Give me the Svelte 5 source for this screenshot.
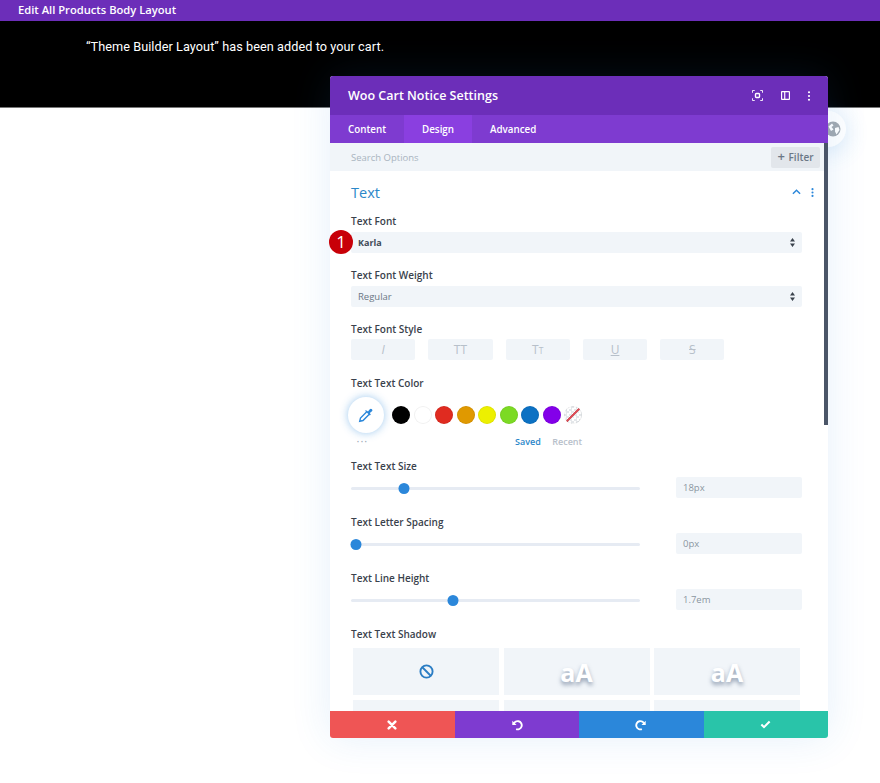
<script>
  const tabs = [
    { name: 'Content', active: false },
    { name: 'Design', active: true },
    { name: 'Advanced', active: false }
  ];
  const swatches = ['#000000', '#ffffff', '#e02b20', '#e09900', '#edf000', '#7cda24', '#0c71c3', '#8300e9'];
  const sliders = [
    { label: 'Text Text Size', value: '18px', pct: 18.3 },
    { label: 'Text Letter Spacing', value: '0px', pct: 1.7 },
    { label: 'Text Line Height', value: '1.7em', pct: 35.3 }
  ];
</script>

<div class="page">
  <div class="topbar">Edit All Products Body Layout</div>
  <div class="notice"><p>“Theme Builder Layout” has been added to your cart.</p></div>

  <div class="closer">
    <svg viewBox="0 0 16 16" width="16" height="16">
      <circle cx="8" cy="8" r="7.5" fill="#a3a9b0" />
      <path d="M3.5 5.5 7 2.5l1.5 2-2 1.5 2 2.5L6 10ZM10 7l3.5-1 1 3-3 4.500-1.500-3Z" fill="#fff" />
    </svg>
  </div>

  <section class="modal">
    <header class="head">
      <h1>Woo Cart Notice Settings</h1>
      <div class="head-icons">
        <svg viewBox="0 0 12 12" width="11" height="11" fill="none" stroke="#fff" stroke-width="1">
          <path d="M.5 3V.5H3M9 .5h2.500V3M11.500 9v2.500H9M3 11.500H.5V9" />
          <rect x="3.800" y="3.800" width="4.400" height="4.400" rx="1" stroke-width="1.500" />
        </svg>
        <svg viewBox="0 0 10 10" width="9" height="9">
          <path fill="#fff" fill-rule="evenodd" d="M1 0h8a1 1 0 0 1 1 1v8a1 1 0 0 1-1 1H1a1 1 0 0 1-1-1V1a1 1 0 0 1 1-1Zm.3 1.300v7.400h2.200V1.300Zm3.500 0v7.400h3.900V1.300Z" />
        </svg>
        <svg class="head-dots" viewBox="0 0 4 12" width="4" height="10" fill="#fff">
          <circle cx="2" cy="1.500" r="1.300" /><circle cx="2" cy="6" r="1.300" /><circle cx="2" cy="10.500" r="1.300" />
        </svg>
      </div>
    </header>

    <nav class="tabs">
      {#each tabs as t}
        <div class="tab" class:active={t.active}>{t.name}</div>
      {/each}
    </nav>

    <div class="search">
      <span>Search Options</span>
      <button class="filter"><b>+</b> Filter</button>
    </div>

    <div class="scrollbar"></div>

    <div class="body">
      <div class="section-head">
        <h2>Text</h2>
        <div class="section-icons">
          <svg viewBox="0 0 10 6" width="9" height="6" fill="none" stroke="#2b87da" stroke-width="1.600"><path d="M1 5l4-4 4 4" /></svg>
          <svg viewBox="0 0 4 12" width="3" height="9" fill="#2b87da"><circle cx="2" cy="1.500" r="1.400" /><circle cx="2" cy="6" r="1.400" /><circle cx="2" cy="10.500" r="1.400" /></svg>
        </div>
      </div>

      <div class="field">
        <div class="label">Text Font</div>
        <div class="select strong">Karla
          <svg class="arrows" viewBox="0 0 5 9" width="5" height="9" fill="#3a424c"><path d="M2.500 0 5 3.600H0ZM2.500 9 0 5.400h5Z" /></svg>
        </div>
      </div>
      <div class="field">
        <div class="label">Text Font Weight</div>
        <div class="select">Regular
          <svg class="arrows" viewBox="0 0 5 9" width="5" height="9" fill="#3a424c"><path d="M2.500 0 5 3.600H0ZM2.500 9 0 5.400h5Z" /></svg>
        </div>
      </div>
      <div class="field style-field">
        <div class="label">Text Font Style</div>
        <div class="styles">
          <div class="sbtn"><i>I</i></div>
          <div class="sbtn">TT</div>
          <div class="sbtn">T<small>T</small></div>
          <div class="sbtn"><u>U</u></div>
          <div class="sbtn"><s>S</s></div>
        </div>
      </div>

      <div class="field color-field">
        <div class="label">Text Text Color</div>
        <div class="colors">
          <div class="picker">
            <svg viewBox="0 0 16 16" width="16" height="16" fill="none" stroke="#2b87da" stroke-width="1.400">
              <path d="M9 4.500 2.500 11l-.8 3.300L5 13.500 11.500 7" />
              <path fill="#2b87da" stroke="none" d="M8.500 3.500l1.500 1 1.800-2.300a1.500 1.500 0 0 1 2.200 2.100L11.800 6l1 1.500-1 1-5-5Z" />
            </svg>
          </div>
          <div class="swatches">
            {#each swatches as c}
              <span class="swatch" style="background:{c}"></span>
            {/each}
            <span class="swatch none"></span>
          </div>
        </div>
        <div class="color-foot">
          <span class="dots">•••</span>
          <span class="saved">Saved</span>
          <span class="recent">Recent</span>
        </div>
      </div>

      {#each sliders as s}
        <div class="field slider-field">
          <div class="label">{s.label}</div>
          <div class="slider-row">
            <div class="track"><span class="thumb" style="left:{s.pct}%"></span></div>
            <div class="value">{s.value}</div>
          </div>
        </div>
      {/each}

      <div class="field">
        <div class="label">Text Text Shadow</div>
        <div class="shadows">
          <div class="shadow">
            <svg viewBox="0 0 16 16" width="15" height="15" fill="none" stroke="#2b7dc4" stroke-width="2"><circle cx="8" cy="8" r="6.500" /><path d="M3.500 3.500l9 9" /></svg>
          </div>
          <div class="shadow aa">aA</div>
          <div class="shadow aa">aA</div>
          <div class="shadow"></div>
          <div class="shadow"></div>
          <div class="shadow"></div>
        </div>
      </div>
    </div>

    <footer class="foot">
      <div class="act red">
        <svg viewBox="0 0 12 12" width="10" height="10" stroke="#fff" stroke-width="3" stroke-linecap="round"><path d="M2 2l8 8M10 2l-8 8" /></svg>
      </div>
      <div class="act purple">
        <svg viewBox="0 0 14 14" width="12" height="12" fill="none" stroke="#fff" stroke-width="2.200"><path d="M3 6.500A4.800 4.800 0 1 1 6 11.800" /><path d="M1.500 2v5h5" fill="#fff" stroke="none" /></svg>
      </div>
      <div class="act blue">
        <svg viewBox="0 0 14 14" width="12" height="12" fill="none" stroke="#fff" stroke-width="2.200"><path d="M11 6.500A4.800 4.800 0 1 0 8 11.800" /><path d="M12.500 2v5h-5" fill="#fff" stroke="none" /></svg>
      </div>
      <div class="act green">
        <svg viewBox="0 0 14 12" width="11" height="9" fill="none" stroke="#fff" stroke-width="2.800"><path d="M1.500 6l3.500 3.500L12.500 2" /></svg>
      </div>
    </footer>
  </section>

  <div class="badge">1</div>
</div>

<style>
  :global(body) { margin: 0; background: #fff; }
  .page {
    position: relative;
    height: 783px;
    overflow: hidden;
    font-family: "Open Sans", "Liberation Sans", sans-serif;
    color: #32373c;
  }
  .topbar {
    height: 21px;
    line-height: 20px;
    padding-left: 18px;
    background: #6c2eb9;
    color: #fff;
    font-size: 11.200px;
    font-weight: 600;
  }
  .notice {
    height: 87px;
    background: #000;
    border-bottom: 1px solid #777;
    box-sizing: border-box;
  }
  .notice p {
    margin: 0;
    padding: 17px 0 0 86px;
    font-family: "Roboto", sans-serif;
    font-size: 12.700px;
    line-height: 18px;
    font-weight: 400;
    letter-spacing: .06px;
    color: #fff;
  }
  .closer {
    position: absolute;
    left: 810px;
    top: 111px;
    width: 36px;
    height: 36px;
    border-radius: 50%;
    background: #fff;
    box-shadow: 0 4px 24px rgba(43, 135, 218, .2);
    display: flex;
    align-items: center;
    justify-content: flex-end;
    padding-right: 5px;
    box-sizing: border-box;
  }
  .modal {
    position: absolute;
    left: 330px;
    top: 76px;
    width: 498px;
    height: 662px;
    background: #fff;
    display: flex;
    flex-direction: column;
    border-radius: 3px;
    box-shadow: 0 0 40px rgba(43, 135, 218, .12);
  }
  .head {
    flex: none;
    height: 39px;
    background: #6c2eb9;
    display: flex;
    align-items: center;
    justify-content: space-between;
    padding: 0 17px 0 18px;
    border-radius: 3px 3px 0 0;
  }
  h1 {
    margin: 0;
    font-size: 12.500px;
    font-weight: 600;
    color: #fff;
  }
  .head-icons { display: flex; align-items: center; gap: 18px; }
  .head-dots { margin-left: -1px; }
  .tabs {
    flex: none;
    height: 28px;
    background: #7e3bd0;
    display: flex;
  }
  .tab {
    padding: 0 18px;
    line-height: 29px;
    color: #fff;
    font-size: 9.800px;
    font-weight: 600;
  }
  .tab.active { background: #8a3fe0; }
  .search {
    flex: none;
    height: 28px;
    background: #f1f5f9;
    display: flex;
    align-items: center;
    justify-content: space-between;
    padding: 0 8px 0 21px;
    font-size: 9.500px;
    font-weight: 500;
    color: #a9b4c0;
  }
  .filter {
    width: 49px;
    height: 21px;
    padding: 0;
    border: 0;
    border-radius: 2px;
    background: #e2e6eb;
    color: #6b7785;
    font: 600 10px "Open Sans", sans-serif;
  }
  .filter b { font-size: 13px; font-weight: 600; line-height: 10px; margin-right: 1px; }
  .scrollbar {
    position: absolute;
    right: 0;
    top: 67px;
    width: 4.500px;
    height: 282px;
    background: #4a5568;
  }
  .body {
    flex: 1;
    min-height: 0;
    overflow: hidden;
    padding: 0 26px 0 21px;
  }
  .section-head {
    display: flex;
    align-items: center;
    justify-content: space-between;
    height: 42px;
  }
  h2 {
    margin: 0;
    font-size: 14.500px;
    font-weight: 400;
    color: #2b87c9;
  }
  .section-icons { display: flex; align-items: center; gap: 10px; margin-right: -12px; }
  .field { margin-bottom: 14px; }
  .label {
    height: 16px;
    line-height: 16px;
    font-size: 10px;
    font-weight: 600;
    color: #3a424c;
  }
  .select {
    position: relative;
    height: 21px;
    margin-top: 3px;
    padding-left: 7px;
    line-height: 21px;
    background: #f1f5f9;
    border-radius: 2px;
    font-size: 9.500px;
    color: #6b7785;
  }
  .select.strong { color: #3f4a57; font-weight: 700; font-size: 9px; }
  .arrows { position: absolute; right: 7px; top: 6px; }
  .style-field { margin-bottom: 14.500px; }
  .styles { display: flex; gap: 13px; margin-top: 2px; }
  .sbtn {
    width: 64.300px;
    height: 21px;
    background: #f1f5f9;
    border-radius: 2px;
    text-align: center;
    line-height: 21px;
    font-size: 12px;
    color: #b7c0ca;
  }
  .sbtn small { font-size: 8.500px; }
  .colors { display: flex; align-items: center; margin-top: 6px; }
  .picker {
    width: 36px;
    height: 36px;
    margin-left: -3px;
    border-radius: 50%;
    background: #fff;
    box-shadow: 0 0 8px rgba(43, 135, 218, .45);
    display: flex;
    align-items: center;
    justify-content: center;
  }
  .swatches { display: flex; gap: 3.500px; margin-left: 8px; }
  .swatch {
    width: 18px;
    height: 18px;
    border-radius: 50%;
    box-shadow: inset 0 0 0 1px rgba(0, 0, 0, .06);
  }
  .swatch.none {
    background:
      linear-gradient(135deg, transparent 46%, #d9505a 46%, #d9505a 54%, transparent 54%),
      repeating-conic-gradient(#e4e7ea 0 25%, #fff 0 50%) 0 0 / 5px 5px;
  }
  .color-foot {
    display: flex;
    align-items: center;
    height: 14px;
    margin-top: 2px;
    font-size: 9px;
    font-weight: 600;
  }
  .dots { width: 28px; padding-left: 6px; font-size: 5px; letter-spacing: 2px; color: #9aa5b1; }
  .saved { margin-left: 130px; color: #2b87c9; }
  .recent { margin-left: 11.500px; color: #b7c0ca; }
  .color-field { margin-bottom: 9.500px; }
  .slider-field { margin-bottom: 16px; }
  .slider-row { display: flex; align-items: center; justify-content: space-between; margin-top: 3px; }
  .track {
    position: relative;
    width: 289px;
    height: 3px;
    margin-top: 1px;
    border-radius: 2px;
    background: #e6ebf3;
  }
  .thumb {
    position: absolute;
    top: -4px;
    width: 11px;
    height: 11px;
    border-radius: 50%;
    background: #2b87da;
    transform: translateX(-50%);
  }
  .value {
    width: 126px;
    height: 21px;
    padding-left: 7px;
    box-sizing: border-box;
    background: #f1f5f9;
    border-radius: 2px;
    line-height: 21px;
    font-size: 9.500px;
    color: #8b95a1;
  }
  .shadows {
    display: grid;
    grid-template-columns: repeat(3, 146px);
    gap: 5px 4.500px;
    margin: 6px 0 0 2px;
  }
  .shadow {
    height: 47px;
    background: #f1f5f9;
    display: flex;
    align-items: center;
    justify-content: center;
  }
  .aa {
    font-size: 25px;
    font-weight: 700;
    color: #fff;
    text-shadow: 0 3px 4px rgba(70, 90, 120, .55);
  }
  .foot { flex: none; height: 27px; display: flex; }
  .act { flex: 1; display: flex; align-items: center; justify-content: center; }
  .red { background: #ef5555; border-radius: 0 0 0 3px; }
  .purple { background: #7e3bd0; }
  .blue { background: #2b87da; }
  .green { background: #29c4a9; border-radius: 0 0 3px 0; }
  .badge {
    position: absolute;
    left: 329px;
    top: 230px;
    width: 24px;
    height: 24px;
    border-radius: 50%;
    background: #c80008;
    color: #fff;
    font-size: 17px;
    font-weight: 500;
    line-height: 24px;
    text-align: center;
  }
</style>
